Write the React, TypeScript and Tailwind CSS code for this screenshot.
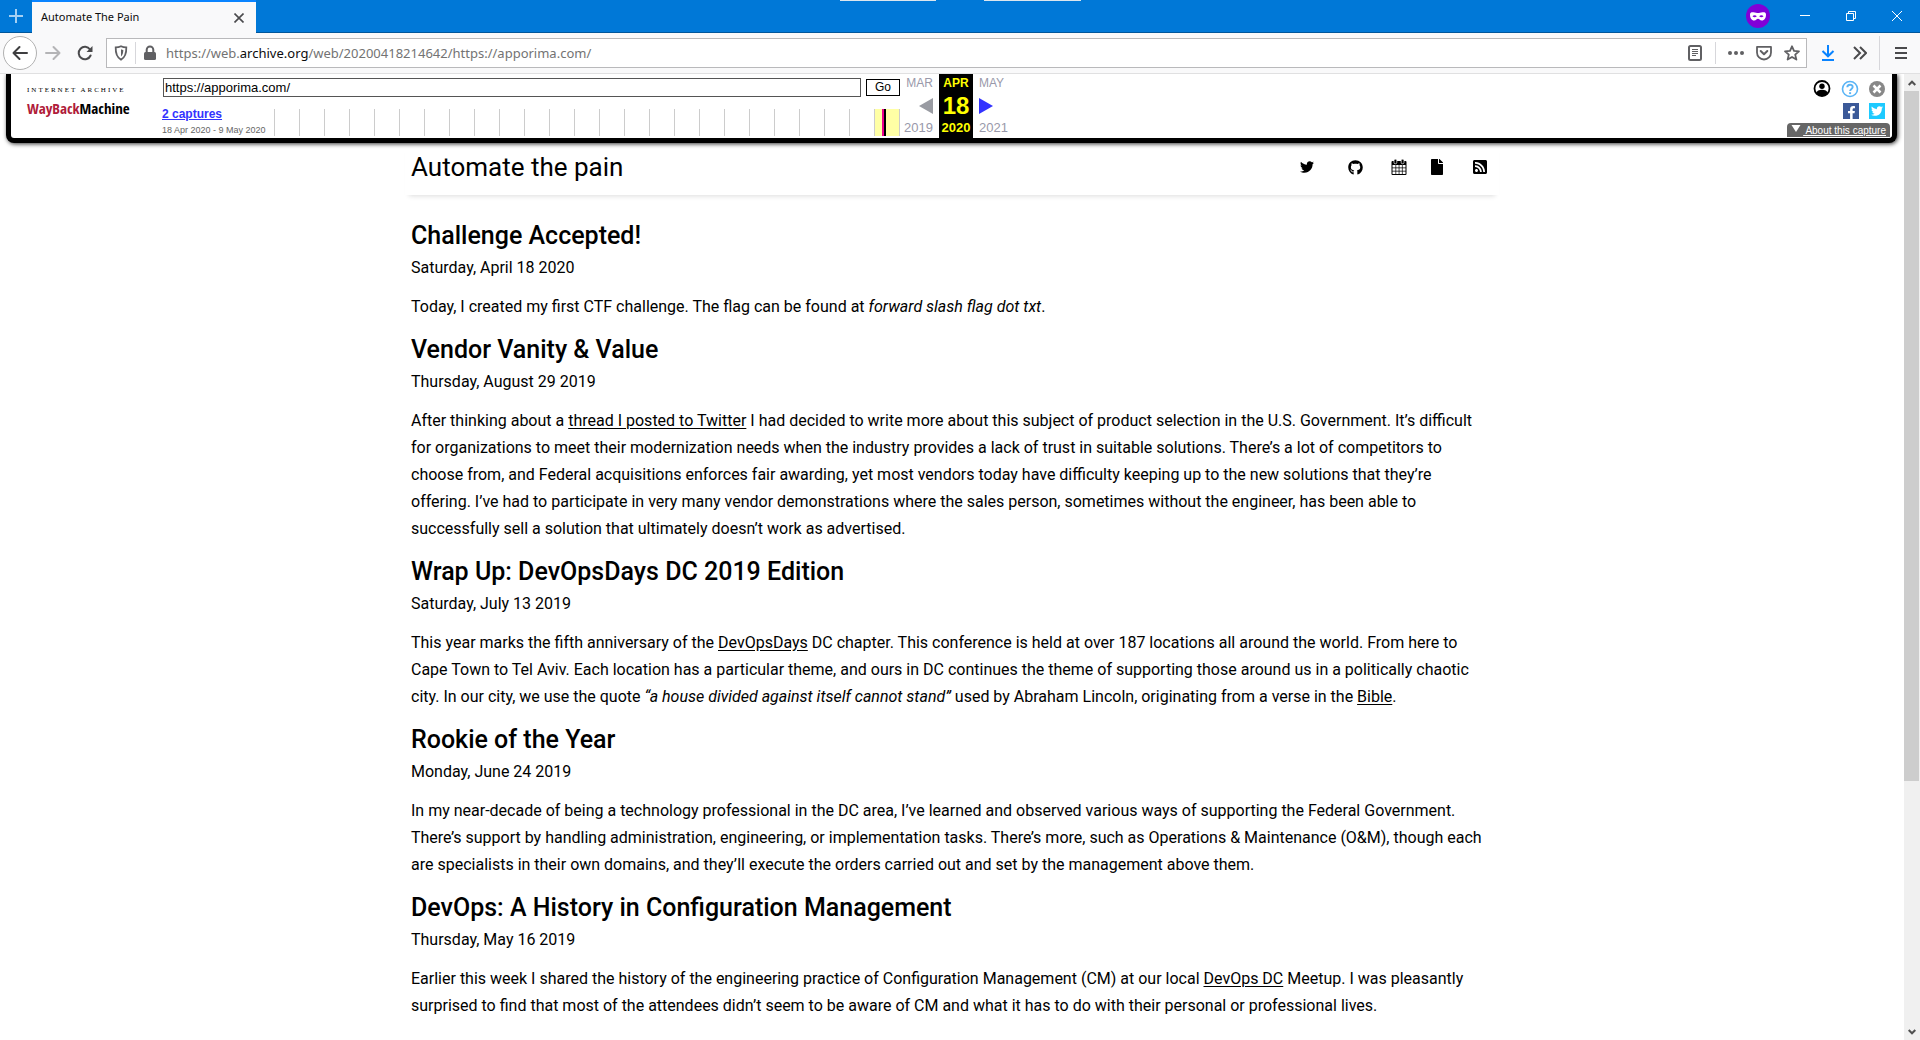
import React from "react";
import { FaTwitter, FaGithub, FaRssSquare, FaFile, FaFacebookF } from "react-icons/fa";

const iconBtn = "flex shrink-0 items-center justify-center";

function TabStrip() {
  return (
    <header className="relative flex h-[33px] shrink-0 border-b border-[#00569b] bg-[#0078d7]">
      <div className="absolute left-[840px] top-0 h-px w-24 bg-[#dce6ee]" />
      <div className="absolute left-[984px] top-0 h-px w-[97px] bg-[#dce6ee]" />
      <button aria-label="New tab" className={`${iconBtn} w-8 text-[#a5d0f3]`}>
        <svg width="14" height="14" viewBox="0 0 14 14" stroke="currentColor" strokeWidth="2">
          <path d="M7 0v14M0 7h14" />
        </svg>
      </button>
      <div className="flex h-[33px] w-56 items-center border-t-2 border-[#0a84ff] bg-[#f9f9fa] pl-[9px] pr-3">
        <span className="flex-1 font-['Noto_Sans',sans-serif] text-[11px] text-[#0c0c0d]">Automate The Pain</span>
        <button aria-label="Close tab" className={iconBtn}>
          <svg width="10" height="10" viewBox="0 0 10 10" stroke="#4a4a4d" strokeWidth="1.6">
            <path d="M0.5 0.5l9 9M9.5 0.5l-9 9" />
          </svg>
        </button>
      </div>
      <div className="ml-auto flex items-center pr-[18px] text-white">
        <svg className="mr-[30px]" width="24" height="24" viewBox="0 0 24 24">
          <circle cx="12" cy="12" r="12" fill="#8000d7" />
          <path
            fill="#fff"
            fillRule="evenodd"
            d="M4 10.500c0-2 1.400-2.500 3.500-2.300 2 .1 3.200.8 4.500.8s2.500-.7 4.500-.8c2.100-.2 3.500.3 3.500 2.300 0 3.500-1.600 6-4.200 6-2 0-2.600-1.700-3.800-1.700s-1.800 1.700-3.800 1.700c-2.600 0-4.200-2.500-4.200-6zm2.500 1.700c1 1.300 3.300 1.300 4.300 0-1-1.400-3.300-1.400-4.300 0zm6.700 0c1 1.300 3.300 1.300 4.300 0-1-1.400-3.300-1.400-4.300 0z"
          />
        </svg>
        <button aria-label="Minimize" className={`${iconBtn} mr-9`}>
          <svg width="10" height="10" viewBox="0 0 10 10" stroke="currentColor">
            <path d="M0 4.500h10" />
          </svg>
        </button>
        <button aria-label="Restore" className={`${iconBtn} mr-9`}>
          <svg width="10" height="10" viewBox="0 0 10 10" stroke="currentColor" fill="none">
            <path d="M.5 2.500h7v7h-7zM2.500 2.500v-2h7v7h-2" />
          </svg>
        </button>
        <button aria-label="Close" className={iconBtn}>
          <svg width="10" height="10" viewBox="0 0 10 10" stroke="currentColor">
            <path d="M0 0l10 10M10 0L0 10" />
          </svg>
        </button>
      </div>
    </header>
  );
}

function NavBar() {
  return (
    <nav className="flex h-[41px] shrink-0 items-center border-b border-[#e0e0e1] bg-[#f9f9fa] text-[#58585a]">
      <button aria-label="Back" className={`${iconBtn} ml-[3px] h-[34px] w-[34px] rounded-full border border-[#b1b1b1] bg-white`}>
        <svg width="16" height="16" viewBox="0 0 16 16" fill="none" stroke="#3e3e40" strokeWidth="2" strokeLinecap="round" strokeLinejoin="round">
          <path d="M15 8H1.500M7.500 2L1.500 8l6 6" />
        </svg>
      </button>
      <button aria-label="Forward" className={`${iconBtn} ml-2 text-[#b4b4b6]`}>
        <svg width="16" height="16" viewBox="0 0 16 16" fill="none" stroke="currentColor" strokeWidth="2" strokeLinecap="round" strokeLinejoin="round">
          <path d="M1 8h13.500M8.500 2l6 6-6 6" />
        </svg>
      </button>
      <button aria-label="Reload" className={`${iconBtn} ml-4`}>
        <svg width="16" height="16" viewBox="0 0 16 16" fill="none" stroke="#4a4a4c" strokeWidth="2" strokeLinecap="round">
          <path d="M13.600 10.500A6.200 6.200 0 1 1 13 4.500" />
          <path d="M15.500 1v6H9.500z" fill="#4a4a4c" stroke="none" />
        </svg>
      </button>
      <div className="ml-[13px] flex h-[30px] min-w-0 flex-1 items-center border border-[#b9b9bb] bg-white">
        <button aria-label="Tracking protection" className={`${iconBtn} ml-1.5`}>
          <svg width="16" height="16" viewBox="0 0 16 16" fill="none" stroke="#606063" strokeWidth="1.800">
            <path d="M8 1.200c1.800.9 3.500 1.200 5.300 1.200.2 6.300-1 10-5.300 12.300C3.700 12.400 2.500 8.700 2.700 2.400 4.500 2.400 6.200 2.100 8 1.200z" />
            <path d="M8 4.300c.8.400 1.500.5 2.300.6 0 3-.6 5-2.300 6.500z" fill="#606063" stroke="none" />
          </svg>
        </button>
        <span className="ml-1.5 h-[22px] w-px bg-[#d7d7db]" />
        <svg className="ml-1.5 shrink-0" width="16" height="16" viewBox="0 0 16 16" fill="#606063">
          <rect x="2" y="7" width="12" height="8" rx="1.500" />
          <path d="M4.700 8V4.700a3.300 3.300 0 0 1 6.600 0V8" fill="none" stroke="#606063" strokeWidth="2" />
        </svg>
        <div className="ml-2 flex-1 pt-0.5 font-['Noto_Sans',sans-serif] text-[13px] text-[#737373]">
          https://web.<span className="text-[#0c0c0d]">archive.org</span>/web/20200418214642/https://apporima.com/
        </div>
        <button aria-label="Reader view" className={`${iconBtn} mr-3`}>
          <svg width="16" height="16" viewBox="0 0 16 16" fill="none" stroke="#606063">
            <rect x="2" y="1" width="12" height="14" rx="1.500" strokeWidth="2" />
            <path d="M5 4.500h6M5 6.500h6M5 8.500h6M5 10.500h4" />
          </svg>
        </button>
        <span className="mr-3 h-[22px] w-px bg-[#d7d7db]" />
        <button aria-label="Page actions" className={`${iconBtn} mr-3`}>
          <svg width="16" height="16" viewBox="0 0 16 16" fill="#606063">
            <circle cx="2" cy="8" r="2" />
            <circle cx="8" cy="8" r="2" />
            <circle cx="14" cy="8" r="2" />
          </svg>
        </button>
        <button aria-label="Save to Pocket" className={`${iconBtn} mr-3`}>
          <svg width="16" height="16" viewBox="0 0 16 16" fill="none" stroke="#606063" strokeWidth="1.800" strokeLinecap="round" strokeLinejoin="round">
            <path d="M1 1.900h14v5.600a7 7 0 0 1-14 0z" />
            <path d="M4.700 6L8 9.200 11.300 6" strokeWidth="2" />
          </svg>
        </button>
        <button aria-label="Bookmark" className={`${iconBtn} mr-1.5`}>
          <svg width="16" height="16" viewBox="0 0 16 16" fill="none" stroke="#606063" strokeWidth="1.800" strokeLinejoin="round">
            <path d="M8 1.300l2 4.600 5 .4-3.800 3.300 1.200 5L8 12l-4.400 2.600 1.200-5L1 6.300l5-.4z" />
          </svg>
        </button>
      </div>
      <button aria-label="Downloads" className={`${iconBtn} ml-3.5`}>
        <svg width="14" height="16" viewBox="0 0 14 16" fill="none" stroke="#0a84ff" strokeWidth="2">
          <path d="M7 0v11M1.500 6L7 11.300 12.500 6M1 15h12" />
        </svg>
      </button>
      <button aria-label="More tools" className={`${iconBtn} ml-[18px]`}>
        <svg width="14" height="14" viewBox="0 0 14 14" fill="none" stroke="#4a4a4c" strokeWidth="2">
          <path d="M1 1l6 6-6 6M7 1l6 6-6 6" />
        </svg>
      </button>
      <span className="ml-3 h-[34px] w-px bg-[#d7d7db]" />
      <button aria-label="Menu" className={`${iconBtn} ml-[15px] mr-[13px]`}>
        <svg width="12" height="12" viewBox="0 0 12 12" stroke="#4a4a4c" strokeWidth="2">
          <path d="M0 1h12M0 6h12M0 11h12" />
        </svg>
      </button>
    </nav>
  );
}

function WaybackLogo() {
  return (
    <a href="#wayback" className="flex w-[151px] shrink-0 flex-col pl-4 pt-2.5">
      <span className="font-['Liberation_Serif',serif] text-[7px] leading-3 tracking-[2px] whitespace-nowrap text-black">
        INTERNET ARCHIVE
      </span>
      <span className="font-['Noto_Sans_ExtraCondensed','Open_Sans_Condensed','Roboto_Condensed','Liberation_Sans',sans-serif] text-[15px] leading-6 font-bold text-black">
        <span className="text-[#b01c3a]">WayBack</span>Machine
      </span>
    </a>
  );
}

const years = Array.from({ length: 25 }, (_, i) => 1996 + i);

function Captures() {
  return (
    <div className="flex w-[738px] flex-col pt-1">
      <form className="flex items-center gap-[5px] pl-px" onSubmit={(e) => e.preventDefault()}>
        <input
          aria-label="Search the Wayback Machine"
          defaultValue="https://apporima.com/"
          className="h-[19px] min-w-0 flex-1 border border-[#555] bg-white px-px text-[13px] text-black"
        />
        <button className="h-[17px] w-[34px] border border-black bg-white text-[12px] leading-[15px] text-black">Go</button>
      </form>
      <div className="mt-3 flex">
        <div className="w-28 shrink-0">
          <a href="#captures" className="block text-[12px] leading-[10px] font-bold text-[#33f] underline">
            2 captures
          </a>
          <div className="mt-1.5 text-[9px] leading-[10px] whitespace-nowrap text-[#666]">18 Apr 2020 - 9 May 2020</div>
        </div>
        <div className="flex h-[27px] flex-1 border-r border-[#ccc]">
          {years.map((y) => (
            <div key={y} className={y === 2020 ? "flex flex-1 border-l border-[#ccc] bg-[#ffffa5]" : "flex-1 border-l border-[#ccc]"}>
              {y === 2020 && (
                <>
                  <span className="ml-[7px] w-0.5 bg-[#ed008c]" />
                  <span className="w-0.5 bg-black" />
                </>
              )}
            </div>
          ))}
        </div>
      </div>
    </div>
  );
}

function DateNav() {
  return (
    <div className="flex text-[12px] text-[#99a]">
      <div className="flex w-[33px] flex-col items-end justify-between pt-0.5 pb-1">
        <a href="#mar" className="leading-[14px]">MAR</a>
        <button aria-label="Previous capture">
          <svg width="14" height="16" viewBox="0 0 14 16" fill="#999ba2">
            <path d="M14 0v16L0 8z" />
          </svg>
        </button>
        <a href="#y2019" className="text-[13px] leading-3">2019</a>
      </div>
      <div className="ml-1.5 flex w-[34px] flex-col items-center justify-between bg-black pt-0.5 pb-1 font-bold text-[#ff0]">
        <span className="leading-[14px]">APR</span>
        <span className="text-[24px] leading-6">18</span>
        <span className="text-[13px] leading-3">2020</span>
      </div>
      <div className="ml-1.5 flex w-[33px] flex-col items-start justify-between pt-0.5 pb-1">
        <a href="#may" className="leading-[14px]">MAY</a>
        <button aria-label="Next capture">
          <svg width="14" height="16" viewBox="0 0 14 16" fill="#33f">
            <path d="M0 0v16l14-8z" />
          </svg>
        </button>
        <a href="#y2021" className="text-[13px] leading-3">2021</a>
      </div>
    </div>
  );
}

function WaybackActions() {
  return (
    <div className="ml-auto flex flex-col items-end pr-0.5 pt-1.5">
      <div className="flex gap-2.5 pr-[5px]">
        <button aria-label="Sign in">
          <svg width="18" height="18" viewBox="0 0 18 18">
            <circle cx="9" cy="8.500" r="7.500" fill="#fff" stroke="#000" strokeWidth="1.800" />
            <circle cx="9" cy="6.300" r="2.700" />
            <path d="M3 13.500c.8-2.800 3-3.800 6-3.800s5.200 1 6 3.800C13.500 15.500 11.500 16 9 16s-4.500-.5-6-2.500z" />
          </svg>
        </button>
        <button aria-label="Help">
          <svg width="18" height="18" viewBox="0 0 18 18" fill="none" stroke="#5ab4f5">
            <circle cx="9" cy="9" r="7.500" strokeWidth="1.600" />
            <path d="M6.300 7.300c0-3.400 5.400-3.400 5.400-.2 0 1.900-2.600 1.900-2.600 4" strokeWidth="1.900" />
            <path d="M9.100 12.200v1.900" strokeWidth="2" />
          </svg>
        </button>
        <button aria-label="Close toolbar">
          <svg width="16" height="18" viewBox="0 0 16 18">
            <circle cx="8" cy="9" r="8" fill="#888" />
            <path d="M4.500 5.500l7 7M11.500 5.500l-7 7" stroke="#fff" strokeWidth="2.500" />
          </svg>
        </button>
      </div>
      <div className="mt-[5px] flex gap-2.5 pr-[5px]">
        <a href="#facebook" aria-label="Share on Facebook" className="flex h-4 w-4 items-end justify-end bg-[#3b5998] pr-px text-white">
          <FaFacebookF size={13} />
        </a>
        <a href="#twitter" aria-label="Share on Twitter" className={`${iconBtn} h-4 w-4 bg-[#1dcaff] text-white`}>
          <FaTwitter size={12} />
        </a>
      </div>
      <button className="mt-1 flex h-3.5 items-center rounded-t bg-[#666] px-1 text-[10px] whitespace-nowrap text-white">
        <svg width="10" height="7" viewBox="0 0 10 7" fill="#fff" className="mr-0.5 mb-1">
          <path d="M0.500 0h9L5 7z" />
        </svg>
        <span className="whitespace-pre underline"> About this capture</span>
      </button>
    </div>
  );
}

function WaybackBar() {
  return (
    <section className="relative z-10 ml-1.5 mr-[7px] flex h-[69px] rounded-b-lg border-x-[5px] border-b-[5px] border-black bg-white font-['Liberation_Sans',sans-serif] shadow-[1px_1px_4px_#333]">
      <WaybackLogo />
      <Captures />
      <DateNav />
      <WaybackActions />
    </section>
  );
}

function CalendarIcon() {
  return (
    <svg width="16" height="16" viewBox="0 0 16 16">
      <rect x="0.500" y="2" width="15" height="14" rx="1" />
      <path
        d="M1.500 6h3v2.400h-3zM5.200 6h2.500v2.400H5.200zM8.400 6h2.500v2.400H8.400zM11.600 6h2.900v2.400h-2.900zM1.500 9.200h3v2.500h-3zM5.200 9.200h2.500v2.500H5.200zM8.400 9.200h2.500v2.500H8.400zM11.600 9.200h2.900v2.500h-2.900zM1.500 12.500h3v2.500h-3zM5.200 12.500h2.500v2.500H5.200zM8.400 12.500h2.500v2.500H8.400zM11.600 12.500h2.900v2.500h-2.900z"
        fill="#fff"
      />
      <rect x="3" y="0.300" width="2.800" height="4.400" rx="1.200" stroke="#fff" strokeWidth="0.700" />
      <rect x="10.200" y="0.300" width="2.800" height="4.400" rx="1.200" stroke="#fff" strokeWidth="0.700" />
    </svg>
  );
}

function SiteHeader() {
  return (
    <header className="flex h-[52px] items-center px-1.5 pb-1 shadow-[0_5px_5px_-4px_rgba(0,0,0,0.14)]">
      <h1 className="flex-1 text-[26px] leading-8">Automate the pain</h1>
      <a href="#twitter-profile" aria-label="Twitter" className="mr-[34px]"><FaTwitter size={14} /></a>
      <a href="#github-profile" aria-label="GitHub" className="mr-7"><FaGithub size={15} /></a>
      <a href="#calendar" aria-label="Calendar" className="mr-[22px]"><CalendarIcon /></a>
      <a href="#resume" aria-label="Resume" className="mr-[27px]"><FaFile size={16} /></a>
      <a href="#rss" aria-label="RSS" className="mr-[5px]"><FaRssSquare size={16} /></a>
    </header>
  );
}

const link = "underline underline-offset-2";

function Post({ title, date, children }: { title: string; date: string; children: React.ReactNode }) {
  return (
    <article className="mb-3.5">
      <h2 className="text-[25px] leading-8 font-medium">{title}</h2>
      <p className="mt-[3px] leading-[26px]">{date}</p>
      <p className="mt-3 leading-[27px]">{children}</p>
    </article>
  );
}

function ScrollBar() {
  return (
    <div aria-hidden="true" className="flex w-4 shrink-0 flex-col bg-[#f0f0f0]">
      <div className="flex h-[17px] items-center justify-center">
        <svg width="8" height="6" viewBox="0 0 8 6" fill="none" stroke="#505050" strokeWidth="2">
          <path d="M0.700 5L4 1.700 7.300 5" />
        </svg>
      </div>
      <div className="flex-1">
        <div className="mr-px h-[74%] bg-[#cdcdcd]" />
      </div>
      <div className="flex h-[17px] items-center justify-center">
        <svg width="8" height="6" viewBox="0 0 8 6" fill="none" stroke="#505050" strokeWidth="2">
          <path d="M0.700 1L4 4.300 7.300 1" />
        </svg>
      </div>
    </div>
  );
}

export default function App() {
  return (
    <div className="flex h-screen flex-col overflow-hidden bg-white">
      <TabStrip />
      <NavBar />
      <div className="flex min-h-0 flex-1">
        <div className="min-w-0 flex-1 overflow-hidden">
          <WaybackBar />
          <main className="mx-auto max-w-[1094px] font-[Roboto,sans-serif] text-base text-black">
            <SiteHeader />
            <div className="mt-[25px] px-1.5">
              <Post title="Challenge Accepted!" date="Saturday, April 18 2020">
                Today, I created my first CTF challenge. The flag can be found at <em>forward slash flag dot txt</em>.
              </Post>
              <Post title="Vendor Vanity &amp; Value" date="Thursday, August 29 2019">
                After thinking about a <a href="#thread" className={link}>thread I posted to Twitter</a> I had decided to
                write more about this subject of product selection in the U.S. Government. It’s difficult for organizations
                to meet their modernization needs when the industry provides a lack of trust in suitable solutions. There’s
                a lot of competitors to choose from, and Federal acquisitions enforces fair awarding, yet most vendors today
                have difficulty keeping up to the new solutions that they’re offering. I’ve had to participate in very many
                vendor demonstrations where the sales person, sometimes without the engineer, has been able to successfully
                sell a solution that ultimately doesn’t work as advertised.
              </Post>
              <Post title="Wrap Up: DevOpsDays DC 2019 Edition" date="Saturday, July 13 2019">
                This year marks the fifth anniversary of the <a href="#devopsdays" className={link}>DevOpsDays</a> DC
                chapter. This conference is held at over 187 locations all around the world. From here to Cape Town to Tel
                Aviv. Each location has a particular theme, and ours in DC continues the theme of supporting those around us
                in a politically chaotic city. In our city, we use the quote{" "}
                <em>“a house divided against itself cannot stand”</em> used by Abraham Lincoln, originating from a verse in
                the <a href="#bible" className={link}>Bible</a>.
              </Post>
              <Post title="Rookie of the Year" date="Monday, June 24 2019">
                In my near-decade of being a technology professional in the DC area, I’ve learned and observed various ways
                of supporting the Federal Government. There’s support by handling administration, engineering, or
                implementation tasks. There’s more, such as Operations &amp; Maintenance (O&amp;M), though each are
                specialists in their own domains, and they’ll execute the orders carried out and set by the management above
                them.
              </Post>
              <Post title="DevOps: A History in Configuration Management" date="Thursday, May 16 2019">
                Earlier this week I shared the history of the engineering practice of Configuration Management (CM) at our
                local <a href="#devopsdc" className={link}>DevOps DC</a> Meetup. I was pleasantly surprised to find that
                most of the attendees didn’t seem to be aware of CM and what it has to do with their personal or
                professional lives.
              </Post>
            </div>
          </main>
        </div>
        <ScrollBar />
      </div>
    </div>
  );
}
